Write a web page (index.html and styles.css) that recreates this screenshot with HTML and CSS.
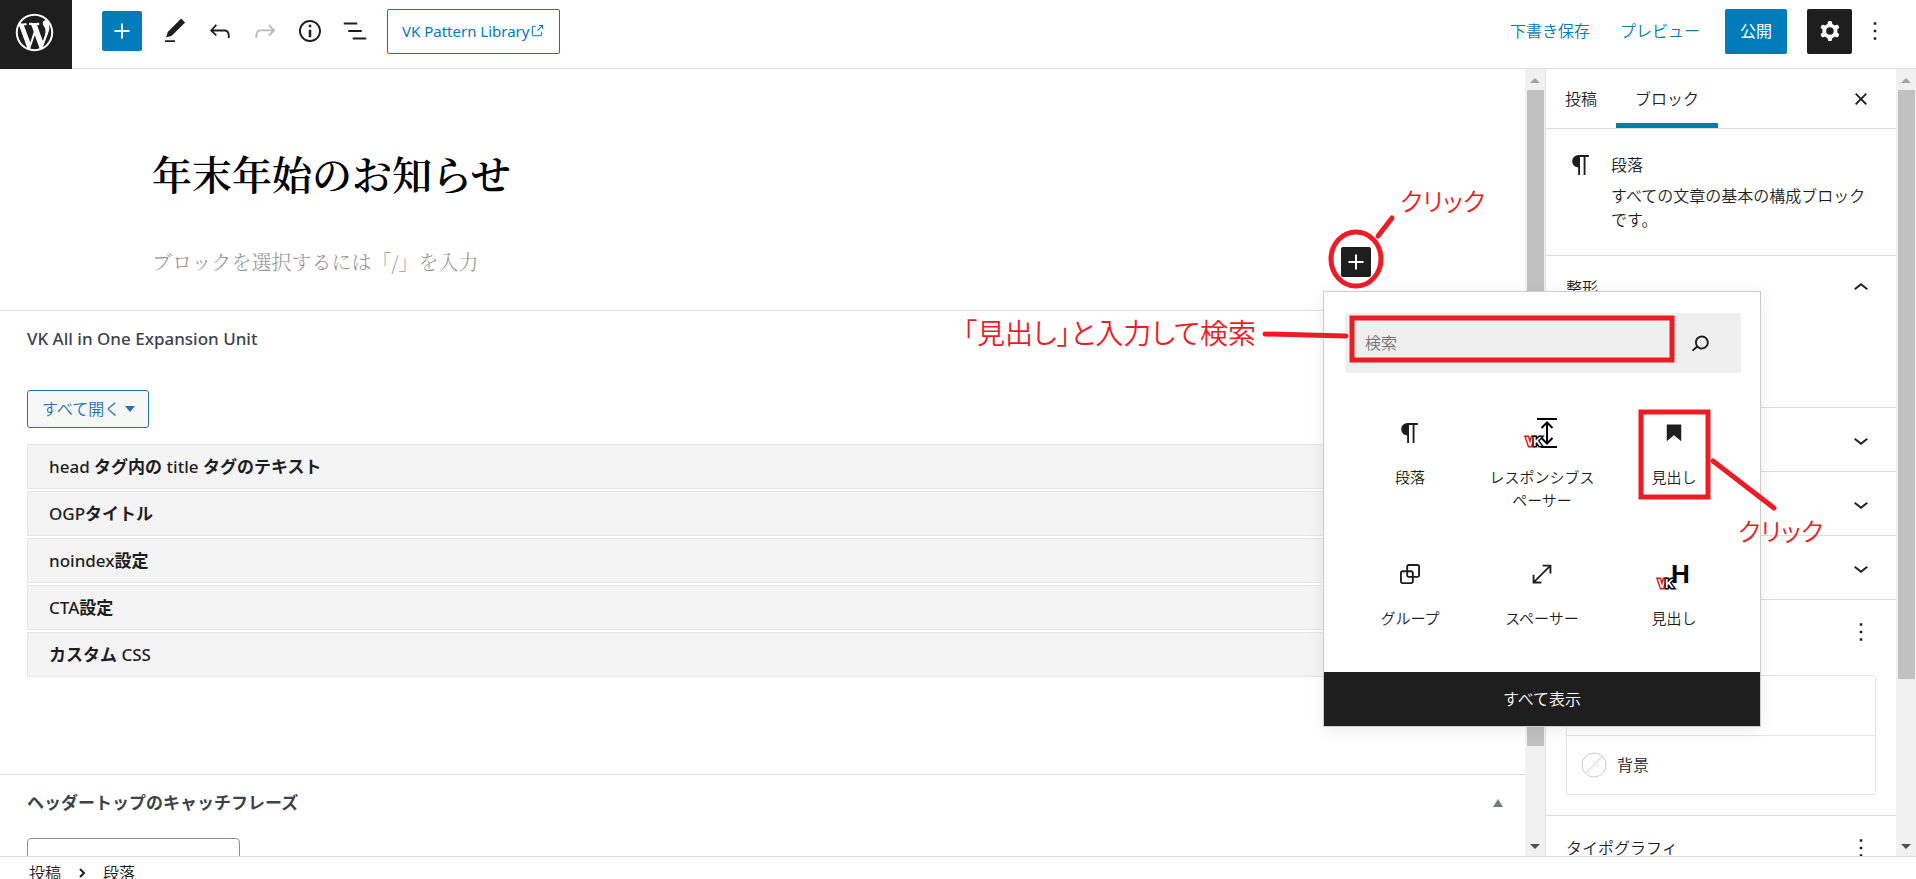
FILE: index.html
```html
<!DOCTYPE html>
<html lang="ja">
<head>
    <meta charset="UTF-8">
    <meta name="viewport" content="width=device-width, initial-scale=1.0">
    <title>投稿を編集</title>
    <link rel="stylesheet" href="styles.css">
</head>
<body>
    <header class="header">
        <a class="logo" href="#" aria-label="WordPress">
            <svg width="45" height="45" viewBox="-2 -2 24 24"><path d="M20 10c0-5.51-4.49-10-10-10C4.48 0 0 4.49 0 10c0 5.52 4.48 10 10 10 5.51 0 10-4.48 10-10zM7.78 15.37L4.37 6.22c.55-.02 1.17-.08 1.17-.08.5-.06.44-1.13-.06-1.11 0 0-1.45.11-2.37.11-.18 0-.37 0-.58-.01C4.12 2.69 6.87 1.11 10 1.11c2.33 0 4.45.87 6.05 2.34-.68-.11-1.65.39-1.65 1.58 0 .74.45 1.36.9 2.1.35.61.55 1.36.55 2.46 0 1.49-1.4 5-1.4 5l-3.03-8.37c.54-.02.82-.17.82-.17.5-.05.44-1.25-.06-1.22 0 0-1.44.12-2.38.12-.87 0-2.33-.12-2.33-.12-.5-.03-.56 1.2-.06 1.22l.92.08 1.26 3.41zM17.41 10c.24-.64.74-1.87.43-4.25.7 1.29 1.05 2.71 1.05 4.25 0 3.29-1.73 6.24-4.4 7.78.97-2.59 1.94-5.2 2.92-7.78zM6.1 18.09C3.12 16.65 1.11 13.53 1.11 10c0-1.3.23-2.48.72-3.59C3.25 10.3 4.67 14.2 6.1 18.09zm4.03-6.63l2.58 6.98c-.86.29-1.76.45-2.71.45-.79 0-1.57-.11-2.29-.33.81-2.38 1.62-4.74 2.42-7.1z"/></svg>
        </a>
        <div class="toolbar">
            <button class="btn-add" aria-label="ブロック挿入ツールを切り替え"><svg class="icon" viewBox="0 0 24 24"><path d="M18 11.2h-5.2V6h-1.6v5.2H6v1.6h5.2V18h1.6v-5.2H18z"/></svg></button>
            <button class="btn-icon" aria-label="ツール"><svg class="icon" viewBox="0 0 24 24"><path d="M20.1 5.1L16.9 2 6.2 12.7l-1.3 4.4 4.5-1.3L20.1 5.1zM4 20.8h8v-1.5H4v1.5z"/></svg></button>
            <button class="btn-icon" aria-label="元に戻す"><svg class="icon" viewBox="0 0 24 24"><path d="M18.3 11.7c-.6-.6-1.4-.9-2.3-.9H6.7l2.9-3.3-1.1-1-4.5 5L8.5 16l1-1-2.7-2.7H16c.5 0 .9.2 1.3.5 1 1 1 3.4 1 4.5v.3h1.5v-.2c0-1.5 0-4.3-1.5-5.7z"/></svg></button>
            <button class="btn-icon" aria-label="やり直す" disabled><svg class="icon" viewBox="0 0 24 24"><path d="M15.6 6.5l-1.1 1 2.9 3.3H8c-.9 0-1.7.3-2.3.9-1.4 1.5-1.4 4.2-1.4 5.6v.2h1.5v-.3c0-1.1 0-3.5 1-4.5.3-.3.7-.5 1.3-.5h9.2L14.5 15l1.1 1.1 4.6-4.6-4.6-5z"/></svg></button>
            <button class="btn-icon" aria-label="詳細"><svg class="icon" viewBox="0 0 24 24"><path d="M12 3.2c-4.8 0-8.8 3.9-8.8 8.8 0 4.8 3.9 8.8 8.8 8.8 4.8 0 8.8-3.9 8.8-8.8 0-4.8-4-8.8-8.8-8.8zm0 16c-4 0-7.2-3.3-7.2-7.2C4.8 8 8 4.8 12 4.8s7.2 3.3 7.2 7.2c0 4-3.2 7.2-7.2 7.2zM11 17h2v-6h-2v6zm0-8h2V7h-2v2z"/></svg></button>
            <button class="btn-icon" aria-label="リスト表示"><svg class="icon" viewBox="0 0 24 24"><path d="M13.8 5.2H3v1.5h10.8V5.2zm-3.6 12v1.5H21v-1.5H10.2zm7.2-6H6.6v1.5h10.8v-1.5z"/></svg></button>
            <a class="btn-pattern" href="#">VK Pattern Library<svg width="16" height="16" viewBox="0 0 24 24"><path d="M18.2 17c0 .7-.6 1.2-1.2 1.2H7c-.7 0-1.2-.6-1.2-1.2V7c0-.7.6-1.2 1.2-1.2h3.2V4.2H7C5.5 4.2 4.2 5.5 4.2 7v10c0 1.5 1.2 2.8 2.8 2.8h10c1.5 0 2.8-1.2 2.8-2.8v-3.6h-1.5V17zM14.9 3v1.5h3.7l-6.4 6.4 1.1 1.1 6.4-6.4v3.7h1.5V3h-6.3z"/></svg></a>
        </div>
        <div class="settings">
            <button class="btn-text">下書き保存</button>
            <button class="btn-text">プレビュー</button>
            <button class="btn-publish">公開</button>
            <button class="btn-cog" aria-label="設定"><svg class="icon" viewBox="0 0 24 24"><path fill-rule="evenodd" d="M10.289 4.836A1 1 0 0111.275 4h1.306a1 1 0 01.987.836l.244 1.466c.787.26 1.503.679 2.108 1.218l1.393-.522a1 1 0 011.216.437l.653 1.13a1 1 0 01-.23 1.273l-1.148.944a6.025 6.025 0 010 2.435l1.149.946a1 1 0 01.23 1.272l-.653 1.13a1 1 0 01-1.216.437l-1.394-.522c-.605.54-1.32.958-2.108 1.218l-.244 1.466a1 1 0 01-.987.836h-1.306a1 1 0 01-.986-.836l-.244-1.466a5.995 5.995 0 01-2.108-1.218l-1.394.522a1 1 0 01-1.217-.436l-.653-1.131a1 1 0 01.23-1.272l1.149-.946a6.026 6.026 0 010-2.435l-1.148-.944a1 1 0 01-.23-1.272l.653-1.131a1 1 0 011.217-.437l1.393.522a5.994 5.994 0 012.108-1.218l.244-1.466zM14.929 12a3 3 0 11-6 0 3 3 0 016 0z"/></svg></button>
            <button class="btn-icon" aria-label="オプション"><svg class="icon" viewBox="0 0 24 24"><path d="M13 19h-2v-2h2v2zm0-6h-2v-2h2v2zm0-6h-2V5h2v2z"/></svg></button>
        </div>
    </header>

    <div class="workspace">
        <main class="editor">
            <div class="canvas">
                <h1 class="post-title">年末年始のお知らせ</h1>
                <div class="block">
                    <p class="block-placeholder">ブロックを選択するには「/」を入力</p>
                    <button class="block-add" aria-label="ブロックを追加"><svg class="icon" viewBox="0 0 24 24"><path d="M18 11.2h-5.2V6h-1.6v5.2H6v1.6h5.2V18h1.6v-5.2H18z"/></svg></button>
                </div>
            </div>

            <section class="metabox">
                <h2 class="metabox-title">VK All in One Expansion Unit</h2>
                <div class="metabox-body">
                    <button class="btn-open">すべて開く<span class="caret"></span></button>
                    <ul class="accordion">
                        <li><button>head <b>タグ内の</b> title <b>タグのテキスト</b></button></li>
                        <li><button>OGP<b>タイトル</b></button></li>
                        <li><button>noindex<b>設定</b></button></li>
                        <li><button>CTA<b>設定</b></button></li>
                        <li><button><b>カスタム</b> CSS</button></li>
                    </ul>
                </div>
            </section>

            <section class="metabox">
                <h2 class="metabox-title"><label class="field-label" for="catch">ヘッダートップのキャッチフレーズ</label><span class="toggle"></span></h2>
                <div class="metabox-field">
                    <input type="text" id="catch">
                </div>
            </section>
        </main>
        <div class="scrollbar">
            <span class="arrow arrow-up"></span>
            <div class="track"><div class="thumb thumb-editor"></div></div>
            <span class="arrow arrow-down"></span>
        </div>

        <aside class="sidebar">
            <div class="tabs">
                <button class="tab">投稿</button>
                <button class="tab active">ブロック</button>
                <button class="btn-close" aria-label="設定を閉じる"><svg class="icon" viewBox="0 0 24 24"><path d="M12 13.06l3.712 3.713 1.061-1.06L13.061 12l3.712-3.712-1.06-1.06L12 10.938 8.288 7.227l-1.061 1.06L10.939 12l-3.712 3.712 1.06 1.061L12 13.061z"/></svg></button>
            </div>
            <div class="card">
                <svg class="icon" viewBox="0 0 24 24"><path d="M18.3 4H9.9v-.1l-.9.2c-2.3.4-4 2.4-4 4.8s1.7 4.4 4 4.8l.7.1V20h1.5V5.5h2.9V20h1.5V5.5h2.7V4z"/></svg>
                <div>
                    <h2 class="card-title">段落</h2>
                    <p class="card-text">すべての文章の基本の構成ブロックです。</p>
                </div>
            </div>
            <div class="panel panel-open">
                <button class="panel-head">整形<svg class="icon" viewBox="0 0 24 24"><path d="M6.5 12.4L12 8l5.5 4.4-.9 1.2L12 10l-4.5 3.6-1-1.2z"/></svg></button>
            </div>
            <div class="panel">
                <button class="panel-head" aria-label="パネルを開く"><svg class="icon" viewBox="0 0 24 24"><path d="M17.5 11.6L12 16l-5.5-4.4.9-1.2L12 14l4.5-3.6 1 1.2z"/></svg></button>
            </div>
            <div class="panel">
                <button class="panel-head" aria-label="パネルを開く"><svg class="icon" viewBox="0 0 24 24"><path d="M17.5 11.6L12 16l-5.5-4.4.9-1.2L12 14l4.5-3.6 1 1.2z"/></svg></button>
            </div>
            <div class="panel">
                <button class="panel-head" aria-label="パネルを開く"><svg class="icon" viewBox="0 0 24 24"><path d="M17.5 11.6L12 16l-5.5-4.4.9-1.2L12 14l4.5-3.6 1 1.2z"/></svg></button>
            </div>
            <div class="panel">
                <button class="panel-head" aria-label="色のオプション"><svg class="icon" viewBox="0 0 24 24"><path d="M13 19h-2v-2h2v2zm0-6h-2v-2h2v2zm0-6h-2V5h2v2z"/></svg></button>
                <div class="colors">
                    <button class="color" aria-label="文字色"></button>
                    <button class="color"><svg width="26" height="26" viewBox="0 0 26 26"><circle cx="13" cy="13" r="12"/><path d="M4.5 21.5l17-17"/></svg>背景</button>
                </div>
            </div>
            <div class="panel">
                <button class="panel-head">タイポグラフィ<svg class="icon" viewBox="0 0 24 24"><path d="M13 19h-2v-2h2v2zm0-6h-2v-2h2v2zm0-6h-2V5h2v2z"/></svg></button>
            </div>
        </aside>
        <div class="scrollbar">
            <span class="arrow arrow-up"></span>
            <div class="track"><div class="thumb thumb-sidebar"></div></div>
            <span class="arrow arrow-down"></span>
        </div>

        <!-- quick inserter -->
        <div class="inserter">
            <div class="search">
                <input type="search" placeholder="検索" aria-label="検索">
                <svg class="icon" viewBox="0 0 24 24"><path d="M13.5 6C10.5 6 8 8.5 8 11.5c0 1.1.3 2.1.9 3l-3.4 3 1 1.1 3.4-2.9c1 .9 2.2 1.4 3.6 1.4 3 0 5.5-2.5 5.5-5.5C19 8.5 16.5 6 13.5 6zm0 9.5c-2.2 0-4-1.8-4-4s1.8-4 4-4 4 1.8 4 4-1.8 4-4 4z"/></svg>
            </div>
            <div class="types">
                <button class="type"><svg class="icon" viewBox="0 0 24 24"><path d="M18.3 4H9.9v-.1l-.9.2c-2.3.4-4 2.4-4 4.8s1.7 4.4 4 4.8l.7.1V20h1.5V5.5h2.9V20h1.5V5.5h2.7V4z"/></svg>段落</button>
                <button class="type">
                    <svg class="icon-vk" viewBox="0 0 30 30">
                        <path class="line" d="M10 1h20M14 29h16M20 5v20M14.5 10l5.5-5.5L25.5 10M14.5 20l5.5 5.5L25.5 20"/>
                        <text class="vk vk-v" x="-1" y="28">V</text>
                        <text class="vk vk-k" x="6" y="28">K</text>
                    </svg>レスポンシブスペーサー</button>
                <button class="type"><svg class="icon" viewBox="0 0 24 24"><path d="M6.2 5.2v13.4l5.8-4.8 5.8 4.8V5.2z"/></svg>見出し</button>
                <button class="type"><svg class="icon" viewBox="0 0 24 24"><path d="M18 4h-7c-1.1 0-2 .9-2 2v3H6c-1.1 0-2 .9-2 2v7c0 1.1.9 2 2 2h7c1.1 0 2-.9 2-2v-3h3c1.1 0 2-.9 2-2V6c0-1.1-.9-2-2-2zm-4.5 14c0 .3-.2.5-.5.5H6c-.3 0-.5-.2-.5-.5v-7c0-.3.2-.5.5-.5h3V13c0 1.1.9 2 2 2h2.5v3zm0-4.5H11c-.3 0-.5-.2-.5-.5v-2.5H13c.3 0 .5.2.5.5v2.5zm5-.5c0 .3-.2.5-.5.5h-3V11c0-1.1-.9-2-2-2h-2.5V6c0-.3.2-.5.5-.5h7c.3 0 .5.2.5.5v7z"/></svg>グループ</button>
                <button class="type"><svg class="icon" viewBox="0 0 24 24"><path d="M7 18h4.5v1.5h-7v-7H6V17L17 6h-4.5V4.5h7v7H18V7L7 18z"/></svg>スペーサー</button>
                <button class="type">
                    <svg class="icon-vk" viewBox="0 0 30 30">
                        <text class="vk-h" x="12" y="24">H</text>
                        <text class="vk vk-v" x="-1" y="29">V</text>
                        <text class="vk vk-k" x="6" y="29">K</text>
                    </svg>見出し</button>
            </div>
            <button class="show-all">すべて表示</button>
        </div>

        <!-- callouts, anchored to the right edge -->
        <svg class="callouts" width="960" height="500" viewBox="956 69 960 500">
            <ellipse cx="1356" cy="259" rx="25" ry="27"/>
            <path d="M1378 236l14-18"/>
            <rect x="1352" y="318" width="320" height="42"/>
            <path d="M1265 334l81 2"/>
            <rect x="1641" y="412" width="67" height="85"/>
            <path d="M1713 461l61 47"/>
            <text class="note-click" x="1400" y="211">クリック</text>
            <text x="963" y="344">「見出し」と入力して検索</text>
            <text class="note-click" x="1738" y="541">クリック</text>
        </svg>
    </div>

    <footer class="footer">
        <a href="#">投稿</a>
        <svg width="8" height="10" viewBox="0 0 8 10"><path d="M2 1l4 4-4 4"/></svg>
        <a href="#">段落</a>
    </footer>
</body>
</html>
```
FILE: styles.css
```css
* {
    box-sizing: border-box;
}
body {
    margin: 0;
    height: 100vh;
    display: flex;
    flex-direction: column;
    overflow: hidden;
    background: #fff;
    color: #1e1e1e;
    font-family: "Noto Sans", "Noto Sans CJK JP", sans-serif;
    font-size: 16px;
    font-weight: 350;
    line-height: 24px;
}
h1, h2, p, ul {
    margin: 0;
    padding: 0;
}
button, input {
    font: inherit;
    color: inherit;
    margin: 0;
    padding: 0;
    border: 0;
    background: none;
}
a {
    color: inherit;
    text-decoration: none;
}
svg {
    fill: currentColor;
    flex: none;
}
.icon {
    display: block;
    width: 30px;
    height: 30px;
}

/* header */
.header {
    flex: none;
    display: flex;
    height: 69px;
    border-bottom: 1px solid #e0e0e0;
}
.logo {
    width: 72px;
    height: 69px;
    display: flex;
    justify-content: center;
    align-items: center;
    padding: 0 4px 5px 0;
    background: #1e1e1e;
    color: #fff;
}
.toolbar, .settings {
    display: flex;
    align-items: center;
    height: 62px;
}
.toolbar {
    padding-left: 30px;
}
.settings {
    margin-left: auto;
    padding-right: 19px;
}
.btn-add {
    display: flex;
    justify-content: center;
    align-items: center;
    width: 40px;
    height: 40px;
    margin-right: 10px;
    border-radius: 2px;
    background: #007cba;
    color: #fff;
}
.btn-icon {
    display: flex;
    justify-content: center;
    align-items: center;
    width: 45px;
    height: 45px;
}
.btn-icon:disabled {
    color: #bbb;
}
.btn-pattern {
    display: flex;
    align-items: center;
    height: 45px;
    margin-left: 10px;
    padding: 0 14px;
    border: 1px solid #007cba;
    border-radius: 2px;
    color: #007cba;
    font-size: 15px;
    font-weight: 400;
}
.btn-text {
    padding: 0 15px;
    color: #007cba;
}
.btn-publish {
    height: 45px;
    margin: 0 20px 0 10px;
    padding: 0 15px;
    border-radius: 2px;
    background: #007cba;
    color: #fff;
    font-weight: 400;
}
.btn-cog {
    display: flex;
    justify-content: center;
    align-items: center;
    width: 45px;
    height: 45px;
    border-radius: 2px;
    background: #1e1e1e;
    color: #fff;
}

/* editor */
.workspace {
    position: relative;
    flex: 1;
    min-height: 0;
    display: flex;
}
.editor {
    flex: 1;
    min-width: 0;
    overflow: hidden;
}
.canvas {
    padding: 74px 154px 33px 152px;
    font-family: "Noto Serif CJK JP", "Noto Serif JP", "Noto Sans CJK JP", serif;
}
.post-title {
    margin-bottom: 44px;
    color: #000;
    font-size: 40px;
    font-weight: 600;
    line-height: 60px;
}
.block {
    display: flex;
    justify-content: space-between;
    align-items: center;
}
.block-placeholder {
    color: #949494;
    font-size: 20px;
    font-weight: 300;
    line-height: 30px;
}
.block-add {
    display: flex;
    justify-content: center;
    align-items: center;
    width: 30px;
    height: 30px;
    border-radius: 2px;
    background: #1e1e1e;
    color: #fff;
}
.metabox {
    border-top: 1px solid #ddd;
}
.metabox-title {
    display: flex;
    justify-content: space-between;
    align-items: center;
    height: 56px;
    padding: 0 22px 0 27px;
    color: #3c434a;
    font-size: 17px;
    font-weight: 500;
}
.field-label {
    font-weight: 700;
}
.metabox-body {
    padding: 23px 27px 97px;
}
.metabox-field {
    padding: 7px 27px;
}
.metabox-field input {
    width: 213px;
    height: 38px;
    border: 1px solid #8c8f94;
    border-radius: 4px;
}
.toggle {
    border: 5px solid transparent;
    border-top: 0;
    border-bottom: 8px solid #787c82;
}
.btn-open {
    display: flex;
    align-items: center;
    height: 38px;
    padding: 0 13px 0 14px;
    border: 1px solid #2271b1;
    border-radius: 3px;
    background: #f6f7f7;
    color: #2271b1;
}
.caret {
    margin-left: 5px;
    border: 5px solid transparent;
    border-top: 6px solid #2271b1;
    border-bottom: 0;
}
.accordion {
    display: flex;
    flex-direction: column;
    gap: 2px;
    margin-top: 16px;
    list-style: none;
}
.accordion button {
    display: block;
    width: 100%;
    height: 45px;
    padding: 0 21px;
    border: 1px solid #e5e5e5;
    background: #f4f4f4;
    font-size: 17px;
    font-weight: 500;
    text-align: left;
}
.accordion b {
    font-weight: 700;
}

/* scrollbars */
.scrollbar {
    flex: none;
    display: flex;
    flex-direction: column;
    align-items: center;
    width: 20px;
    background: #f1f1f1;
}
.track {
    flex: 1;
    width: 17px;
}
.thumb {
    background: #c1c1c1;
}
.thumb-editor {
    height: 88%;
}
.thumb-sidebar {
    height: 79%;
}
.arrow {
    margin: 9px 0 7px;
    border: 5px solid transparent;
}
.arrow-up {
    border-top: 0;
    border-bottom-color: #a3a3a3;
}
.arrow-down {
    border-bottom: 0;
    border-top-color: #505050;
}

/* sidebar */
.sidebar {
    flex: none;
    width: 351px;
    overflow: hidden;
    border-left: 1px solid #e0e0e0;
}
.tabs {
    display: flex;
    height: 60px;
    border-bottom: 1px solid #ddd;
}
.tab {
    padding: 0 19px;
}
.tab.active {
    box-shadow: inset 0 -5px 0 #007cba;
}
.btn-close {
    margin-left: auto;
    padding-right: 20px;
}
.card {
    display: flex;
    gap: 15px;
    padding: 24px 20px 23px;
}
.card-title {
    margin-bottom: 7px;
    font-size: 16px;
    font-weight: 350;
}
.card-text {
    line-height: 24px;
}
.card .icon {
    margin-top: -3px;
}
.panel {
    border-top: 1px solid #ddd;
}
.panel-open {
    padding-bottom: 88px;
}
.panel-head {
    display: flex;
    align-items: center;
    width: 100%;
    height: 63px;
    padding: 0 20px;
}
.panel-head .icon {
    margin-left: auto;
}
.colors {
    margin: 12px 20px 20px;
    border: 1px solid #e5e5e5;
    border-radius: 2px;
}
.color {
    display: flex;
    align-items: center;
    gap: 10px;
    width: 100%;
    height: 59px;
    padding: 0 14px;
}
.color + .color {
    border-top: 1px solid #e5e5e5;
}
.color svg {
    fill: none;
    stroke: #ccc;
}

/* quick inserter */
.inserter {
    position: absolute;
    top: 222px;
    right: 155px;
    width: 438px;
    border: 1px solid #ccc;
    background: #fff;
    box-shadow: 0 3px 15px rgba(0, 0, 0, 0.08);
}
.search {
    display: flex;
    align-items: center;
    height: 60px;
    margin: 21px 19px 20px 21px;
    padding: 0 26px 0 20px;
    border-radius: 2px;
    background: #efefef;
}
.search input {
    flex: 1;
    min-width: 0;
    outline: 0;
}
.search input::placeholder {
    color: #757575;
    opacity: 1;
}
.types {
    display: grid;
    grid-template-columns: repeat(3, 132px);
    grid-template-rows: 141px 138px;
    justify-content: center;
}
.type {
    display: flex;
    flex-direction: column;
    align-items: center;
    gap: 18px;
    padding: 25px 12px 0;
    font-size: 15px;
    line-height: 23px;
}
.icon-vk {
    width: 30px;
    height: 30px;
    overflow: visible;
}
.icon-vk .line {
    fill: none;
    stroke: #000;
    stroke-width: 2;
}
.vk {
    fill: #fff;
    font: bold 12px "Liberation Sans", sans-serif;
    stroke-width: 3;
    paint-order: stroke;
}
.vk-v {
    stroke: #d8141c;
}
.vk-k {
    stroke: #000;
}
.vk-h {
    fill: #000;
    font: bold 26px "Liberation Sans", sans-serif;
}
.show-all {
    display: block;
    width: 100%;
    height: 54px;
    background: #1e1e1e;
    color: #fff;
}

/* callouts */
.callouts {
    position: absolute;
    top: 0;
    right: 0;
    fill: none;
    stroke: #ed1c24;
    stroke-width: 5;
    stroke-linecap: round;
    pointer-events: none;
}
.callouts text {
    fill: #ed1c24;
    stroke: none;
    font-family: "Noto Sans CJK JP", sans-serif;
    font-size: 28px;
    font-feature-settings: "palt";
}
.callouts .note-click {
    font-size: 25px;
}

/* footer */
.footer {
    flex: none;
    display: flex;
    align-items: center;
    gap: 17px;
    height: 23px;
    padding: 10px 29px 0;
    border-top: 1px solid #ddd;
}
.footer svg {
    fill: none;
    stroke: #1e1e1e;
    stroke-width: 2;
}
```
